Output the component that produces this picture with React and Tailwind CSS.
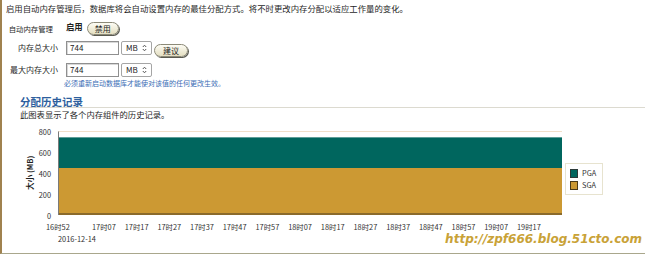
import React from 'react';

const xTicks = ['17时07', '17时17', '17时27', '17时37', '17时47', '17时57', '18时07', '18时17', '18时27', '18时37', '18时47', '18时57', '19时07', '19时17'];
const yTicks = ['800', '600', '400', '200', '0'];

const PillButton = ({ children, className = '' }) => (
  <button className={`flex items-center justify-center rounded-full border border-[#8c8a78] bg-gradient-to-b from-[#fdfcf4] to-[#e4dfc2] shadow-[1px_1px_0_#5a5a50] text-[8px] leading-none text-[#222] ${className}`}>
    {children}
  </button>
);

const SizeInput = () => (
  <div className="flex items-center">
    <div className="ml-[8px] w-[53px] h-[14px] border border-[#8f8f8f] shadow-[inset_1px_1px_0_#d8d8d8] bg-white flex items-center pl-[3px] text-[8px] text-[#222]">744</div>
    <div className="ml-[2px] w-[31px] h-[14px] border border-[#a5a5a5] rounded-[2px] bg-white flex items-center justify-between pl-[4px] pr-[4px] text-[8px] text-[#222]">
      <span>MB</span>
      <svg width="5" height="8" viewBox="0 0 5 8" fill="none" stroke="#555" strokeWidth="1">
        <path d="M0.8 3 L2.5 1.2 L4.2 3" />
        <path d="M0.8 5 L2.5 6.8 L4.2 5" />
      </svg>
    </div>
  </div>
);

export default function App() {
  return (
    <div className="w-[645px] h-[255px] bg-white relative overflow-hidden font-['Noto_Sans_CJK_SC','Noto_Sans',sans-serif] text-[#1f1f1f]">
      <div className="h-[254px] border-l-2 border-l-[#a0824f] border-b border-b-[#a9a78c] flex flex-col">
        <p className="mt-[3px] ml-[4px] h-[11px] text-[8.4px] leading-[11px] whitespace-nowrap">
          启用自动内存管理后，数据库将会自动设置内存的最佳分配方式。将不时更改内存分配以适应工作量的变化。
        </p>

        <div className="mt-[8px] h-[13px] flex items-center">
          <span className="w-[51px] text-right text-[7.4px] leading-none">自动内存管理</span>
          <span className="ml-[13px] mb-[5px] text-[8.4px] leading-none font-bold">启用</span>
          <PillButton className="ml-[4px] w-[32px] h-[13px]">禁用</PillButton>
        </div>

        <div className="mt-[6px] flex items-start">
          <span className="w-[56px] h-[14px] flex items-center justify-end text-[8px] leading-none">内存总大小</span>
          <SizeInput />
          <PillButton className="ml-[2px] mt-[3px] w-[34px] h-[13px]">建议</PillButton>
        </div>

        <div className="mt-[6px] flex items-start">
          <span className="w-[56px] h-[14px] flex items-center justify-end text-[8px] leading-none">最大内存大小</span>
          <SizeInput />
        </div>

        <p className="mt-[2px] ml-[62px] h-[9px] text-[7px] leading-[9px] text-[#3a6db5] whitespace-nowrap">
          必须重新启动数据库才能使对该值的任何更改生效。
        </p>

        <div className="mt-[8px] ml-[18px] h-[12px] border-b border-[#dcdad0]">
          <h2 className="text-[10.5px] leading-[11px] font-bold text-[#2e5f9e]">分配历史记录</h2>
        </div>
        <p className="mt-[1px] ml-[18px] text-[8.3px] leading-[11px]">此图表显示了各个内存组件的历史记录。</p>

        <div className="mt-[7px] flex items-start">
          <div className="ml-[20px] mt-[4px] w-[16px] h-[84px] flex items-center justify-center">
            <span className="-rotate-90 whitespace-nowrap text-[7.6px] leading-none font-bold">大小 (MB)</span>
          </div>
          <div className="mt-[1px] w-[14px] h-[92px] flex flex-col justify-between items-end pr-[1px]">
            {yTicks.map(t => (
              <span key={t} className="h-[8px] leading-[8px] text-[7.4px] text-[#333]">{t}</span>
            ))}
          </div>
          <div className="ml-[6px] mt-[4px] w-[504px] h-[84px] border-l border-[#7a7a7a] border-t border-t-[#f1dfca] flex flex-col">
            <div className="h-[5px]" />
            <div className="h-[31px] bg-[#00665e] border-t border-[#5f9d98]" />
            <div className="flex-1 bg-[#cc9933] border-b-2 border-[#8a6a2b]" />
          </div>
          <div className="ml-[3px] mt-[36px] w-[38px] h-[32px] border border-[#e7e3cf] flex flex-col justify-center gap-[3px] pl-[4px]">
            <div className="flex items-center">
              <span className="w-[8px] h-[9px] bg-[#00665e] border border-[#2c3a38]" />
              <span className="ml-[4px] text-[7.4px] leading-none text-[#333]">PGA</span>
            </div>
            <div className="flex items-center">
              <span className="w-[8px] h-[9px] bg-[#cc9933] border border-[#4a3a1a]" />
              <span className="ml-[4px] text-[7.4px] leading-none text-[#333]">SGA</span>
            </div>
          </div>
        </div>

        <div className="mt-[3px] pl-[44px] h-[8px] flex text-[7.4px] leading-[8px] text-[#333] whitespace-nowrap">
          <span className="w-[46px]">16时52</span>
          {xTicks.map(t => (
            <span key={t} className="w-[32.7px] shrink-0">{t}</span>
          ))}
        </div>
        <p className="mt-[3px] ml-[56px] text-[7.4px] leading-[10px] text-[#333]">2016-12-14</p>
      </div>

      <span className="absolute right-[3px] top-[231px] font-['DejaVu_Sans',sans-serif] text-[12px] leading-[16px] font-bold italic text-[#c9a237]">
        http://zpf666.blog.51cto.com
      </span>
    </div>
  );
}
